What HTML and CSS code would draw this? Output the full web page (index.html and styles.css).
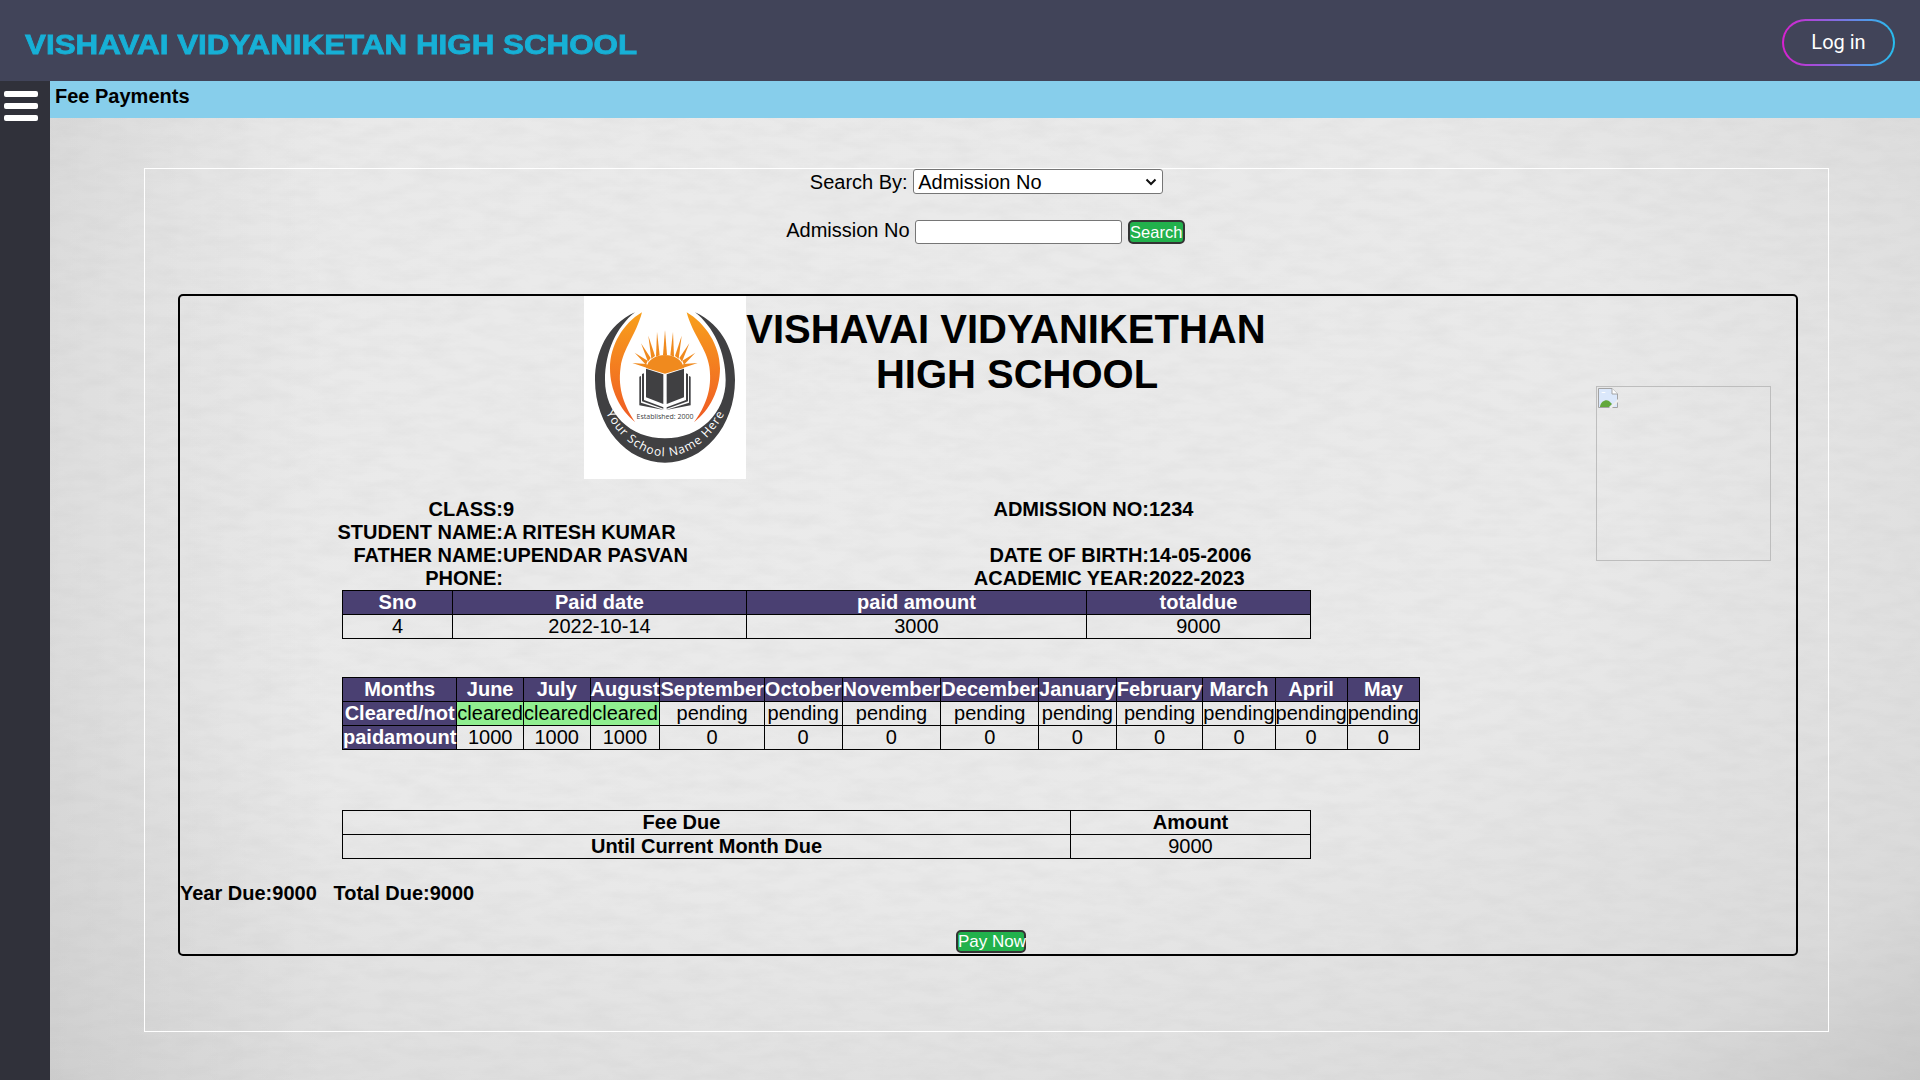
FILE: index.html
```html
<!DOCTYPE html>
<html lang="en">
<head>
  <meta charset="UTF-8" />
  <title>Fee Payments</title>
  <link rel="stylesheet" href="styles.css">
</head>
<body>
  <div class="topbar">
    <div class="brand">VISHAVAI VIDYANIKETAN HIGH SCHOOL</div>
    <button class="login-btn">Log in</button>
  </div>

  <div class="layout">
    <div class="sidebar">
      <div class="menu-icon"><span></span><span></span><span></span></div>
    </div>

    <div class="page">
      <!-- wall texture -->
      <svg class="texture" width="100%" height="100%">
        <filter id="plaster">
          <feTurbulence type="fractalNoise" baseFrequency="0.03 0.09" numOctaves="4" seed="7" />
          <feColorMatrix type="matrix" values="0 0 0 0 0.45  0 0 0 0 0.45  0 0 0 0 0.45  0.2 0 0 0 -0.07" />
        </filter>
        <rect width="100%" height="100%" filter="url(#plaster)" />
      </svg>

      <div class="pagebar">Fee Payments</div>

      <div class="panel">
        <div class="search-row">
          <label for="searchBy">Search By:</label>
          <span class="select-wrap">
            <select id="searchBy" class="search-select">
              <option>Admission No</option>
            </select>
            <svg class="select-arrow" width="12" height="8" viewBox="0 0 12 8">
              <path d="M1.500 1.500L6 6L10.500 1.500" fill="none" stroke="#111" stroke-width="2" />
            </svg>
          </span>
        </div>
        <div class="search-row second">
          <label for="admNo">Admission No</label>
          <input type="text" id="admNo" class="search-input" />
          <button class="green-btn search-btn">Search</button>
        </div>

        <div class="receipt">
          <div class="receipt-grid">
            <div class="receipt-main">
              <div class="school-head">
                <div class="logo">
                  <svg width="162" height="183" viewBox="72 48 486 549">
                    <defs>
                      <linearGradient id="wing" x1="0" y1="0" x2="0" y2="1">
                        <stop offset="0" stop-color="#f8a01c" />
                        <stop offset="1" stop-color="#ef5a24" />
                      </linearGradient>
                      <path id="ringText" d="M122 366 C170 480 250 529 315 529 C385 529 462 480 510 366" fill="none" />
                    </defs>
                    <rect x="72" y="48" width="486" height="549" fill="#fff" />
                    <path fill="#404042" d="M225 97 C140 135 105 220 105 300 C105 440 200 548 315 548 C430 548 525 440 525 300 C525 220 490 135 405 97 C460 140 497 215 497 300 C497 400 420 475 315 475 C210 475 135 400 135 300 C135 215 170 140 225 97Z" />
                    <path fill="url(#wing)" d="M246 97 C190 130 150 195 150 265 C150 330 180 390 226 427 C195 380 172 330 182 260 C190 205 228 165 246 97Z" />
                    <path fill="url(#wing)" d="M380 97 C436 130 480 195 480 265 C480 330 450 390 402 427 C435 380 458 330 448 260 C440 205 398 165 380 97Z" />
                    <g fill="#f08a1e">
                      <polygon points="315,150 309,225 321,225" />
                      <polygon points="291,155 288,230 299,226" />
                      <polygon points="339,155 331,226 342,230" />
                      <polygon points="265,167 274,236 285,228" />
                      <polygon points="365,167 345,228 356,236" />
                      <polygon points="243,190 264,245 272,234" />
                      <polygon points="388,190 358,234 366,245" />
                      <polygon points="224,218 258,254 263,242" />
                      <polygon points="406,218 367,242 372,254" />
                      <polygon points="217,249 262,264 260,252" />
                      <polygon points="413,249 370,252 368,264" />
                      <path d="M258 264 C270 212 360 212 372 264 L315 281Z" />
                    </g>
                    <g fill="#404042">
                      <polygon points="258,266 310,283 310,372 258,352" />
                      <polygon points="372,266 320,283 320,372 372,352" />
                      <polygon points="246,282 252,280 252,360 310,382 310,386 246,364" />
                      <polygon points="384,282 378,280 378,360 320,382 320,386 384,364" />
                      <polygon points="238,290 243,288 243,368 312,390 318,390 387,368 387,288 392,290 392,376 318,390 312,390 238,376" />
                    </g>
                    <text class="logo-small" x="315" y="416" text-anchor="middle">Established: 2000</text>
                    <text class="logo-ring">
                      <textPath href="#ringText" startOffset="50%" text-anchor="middle">Your School Name Here</textPath>
                    </text>
                  </svg>
                </div>
                <h1 class="school-name">VISHAVAI VIDYANIKETHAN&nbsp;&nbsp;<br>HIGH SCHOOL</h1>
              </div>

              <div class="student-info">
                <div class="lbl">CLASS:</div><div>9</div>
                <div class="lbl">ADMISSION NO:</div><div>1234</div>
                <div class="lbl">STUDENT NAME:</div><div>A RITESH KUMAR</div>
                <div class="lbl"></div><div></div>
                <div class="lbl">FATHER NAME:</div><div>UPENDAR PASVAN</div>
                <div class="lbl">DATE OF BIRTH:</div><div>14-05-2006</div>
                <div class="lbl">PHONE:</div><div></div>
                <div class="lbl">ACADEMIC YEAR:</div><div>2022-2023</div>
              </div>

              <table class="fee-table paid-table">
                <tr><th class="c-sno">Sno</th><th class="c-date">Paid date</th><th class="c-amt">paid amount</th><th>totaldue</th></tr>
                <tr><td>4</td><td>2022-10-14</td><td>3000</td><td>9000</td></tr>
              </table>

              <table class="fee-table months-table">
                <tr>
                  <th>Months</th><th>June</th><th>July</th><th>August</th><th>September</th><th>October</th><th>November</th><th>December</th><th>January</th><th>February</th><th>March</th><th>April</th><th>May</th>
                </tr>
                <tr>
                  <th>Cleared/not</th>
                  <td class="cleared">cleared</td><td class="cleared">cleared</td><td class="cleared">cleared</td>
                  <td>pending</td><td>pending</td><td>pending</td><td>pending</td><td>pending</td><td>pending</td><td>pending</td><td>pending</td><td>pending</td>
                </tr>
                <tr>
                  <th>paidamount</th>
                  <td>1000</td><td>1000</td><td>1000</td><td>0</td><td>0</td><td>0</td><td>0</td><td>0</td><td>0</td><td>0</td><td>0</td><td>0</td>
                </tr>
              </table>

              <table class="fee-table due-table">
                <tr><td class="due-name fee-due">Fee Due</td><td class="due-head">Amount</td></tr>
                <tr><td class="due-name">Until Current Month Due</td><td>9000</td></tr>
              </table>
            </div>

            <div class="photo">
              <svg width="20" height="20" viewBox="0 0 20 20">
                <path d="M.5.5H14L19.5 6V19.5H.5Z" fill="#dbe8fb" stroke="#a3a3a3" />
                <path d="M14 .5V6H19.5" fill="#fff" stroke="#a3a3a3" />
                <path d="M2 18.500C3 13 8 11 11 13L14 16L11 19H2Z" fill="#62a83c" />
                <path d="M3 5C4 3.500 7 3.500 8 5Z" fill="#fff" />
                <path d="M11 20L20 11V14L14 20Z" fill="#eee" />
              </svg>
            </div>
          </div>

          <div class="totals">Year Due:9000&nbsp;&nbsp;&nbsp;Total Due:9000</div>
          <div class="pay-row"><button class="green-btn pay-btn">Pay Now</button></div>
        </div>
      </div>
    </div>
  </div>
</body>
</html>
```

FILE: styles.css
```css
* {
  box-sizing: border-box;
  margin: 0;
  padding: 0;
}

body {
  height: 1080px;
  overflow: hidden;
  font-family: "Liberation Sans", Arial, sans-serif;
  font-size: 20px;
  color: #000;
  background: #e8e8e8;
}

.topbar {
  height: 81px;
  padding: 4px 25px 0;
  display: flex;
  align-items: center;
  justify-content: space-between;
  background: #414459;
}

.brand {
  padding-top: 5px;
  font-size: 28px;
  font-weight: bold;
  color: #17b0d6;
  -webkit-text-stroke: 0.8px #17b0d6;
  transform: scaleX(1.12);
  transform-origin: left center;
}

.login-btn {
  width: 113px;
  height: 47px;
  padding-bottom: 2px;
  border: 2px solid transparent;
  border-radius: 24px;
  font-family: Roboto, sans-serif;
  font-size: 20px;
  color: #fff;
  background: linear-gradient(#414459, #414459) padding-box,
    linear-gradient(to right, #d81fd0, #25c0f0) border-box;
}

.layout {
  display: flex;
  height: 999px;
}

.sidebar {
  width: 50px;
  flex-shrink: 0;
  padding: 10px 4px;
  background: #30313a;
}

.menu-icon {
  display: flex;
  flex-direction: column;
  gap: 6px;
}

.menu-icon span {
  display: block;
  width: 34px;
  height: 6px;
  border-radius: 2px;
  background: #fff;
}

.page {
  flex: 1;
  position: relative;
  background: linear-gradient(to right, rgba(0, 0, 0, 0.05), transparent 15%),
    radial-gradient(ellipse at 42% 35%, #ebebeb 0%, #e9e9e9 50%, #dadada 85%, #c8c8c8 100%);
}

.texture {
  position: absolute;
  top: 0;
  left: 0;
}

.pagebar {
  position: relative;
  height: 37px;
  padding: 4px 5px 0;
  font-weight: bold;
  background: #87ceeb;
}

.panel {
  position: relative;
  width: 1685px;
  height: 864px;
  margin: 50px 0 0 94px;
  border: 1px solid #fff;
  text-align: center;
}

.search-row {
  height: 25px;
  line-height: 27px;
}

.search-row.second {
  margin-top: 26px;
  padding-right: 2px;
  line-height: 21px;
}

.select-wrap {
  position: relative;
  display: inline-block;
  vertical-align: top;
  height: 25px;
}

.search-select {
  display: block;
  width: 250px;
  height: 25px;
  padding-left: 4px;
  border: 1px solid #767676;
  border-radius: 3px;
  appearance: none;
  font-family: "Liberation Sans", Arial, sans-serif;
  font-size: 20px;
  background: #fff;
}

.select-arrow {
  position: absolute;
  top: 9px;
  right: 6px;
}

.search-input {
  width: 207px;
  height: 24px;
  border: 1px solid #767676;
  border-radius: 3px;
  font-size: 16px;
  vertical-align: top;
  background: #fff;
}

.green-btn {
  border: 2px solid #333;
  border-radius: 5px;
  font-family: "Liberation Sans", Arial, sans-serif;
  font-size: 16.500px;
  color: #fff;
  white-space: nowrap;
  background: #22b14c;
}

.search-btn {
  width: 57px;
  height: 24px;
  vertical-align: top;
}

.receipt {
  width: 1620px;
  height: 662px;
  margin: 49px 0 0 33px;
  border: 2px solid #000;
  border-radius: 5px;
  text-align: left;
}

.receipt-grid {
  display: grid;
  grid-template-columns: 1fr auto;
}

.school-head {
  display: flex;
  padding-left: 404px;
}

.logo svg {
  display: block;
}

.school-name {
  width: 542px;
  padding-top: 11px;
  font-size: 40px;
  font-weight: bold;
  text-align: center;
  white-space: nowrap;
}

.student-info {
  display: grid;
  grid-template-columns: 173px 300px 346px auto;
  grid-auto-rows: 23px;
  margin: 19px 0 0 150px;
  line-height: 23px;
  font-weight: bold;
}

.lbl {
  text-align: right;
}

.fee-table {
  margin-left: 162px;
  border-collapse: collapse;
  line-height: 23px;
}

.fee-table th, .fee-table td {
  padding: 0;
  border: 1px solid #000;
  text-align: center;
}

.fee-table th {
  color: #fff;
  font-weight: bold;
  background: #4a4072;
}

.cleared {
  background: #90ee90;
}

.paid-table, .due-table {
  width: 969px;
  table-layout: fixed;
}

.c-sno {
  width: 110px;
}

.c-date {
  width: 294px;
}

.c-amt {
  width: 340px;
}

.months-table {
  margin-top: 38px;
}

.due-table {
  margin-top: 60px;
}

.due-name {
  width: 728px;
  font-weight: bold;
}

.due-head {
  font-weight: bold;
}

.fee-table .fee-due {
  padding-right: 50px;
}

.photo {
  width: 175px;
  height: 175px;
  margin: 90px 25px 0 0;
  padding: 1px;
  border: 1px solid #bdbdbd;
}

.photo svg {
  display: block;
}

.totals {
  margin-top: 23px;
  line-height: 23px;
  font-weight: bold;
}

.pay-row {
  margin-top: 24px;
  padding-left: 6px;
  text-align: center;
}

.pay-btn {
  width: 70px;
  height: 23px;
  display: inline-block;
  font-size: 17px;
}

.logo-small {
  font-family: "Open Sans", sans-serif;
  font-size: 21px;
  fill: #404042;
}

.logo-ring {
  font-family: "Open Sans", sans-serif;
  font-size: 36px;
  letter-spacing: 3px;
  fill: #fff;
}
```
